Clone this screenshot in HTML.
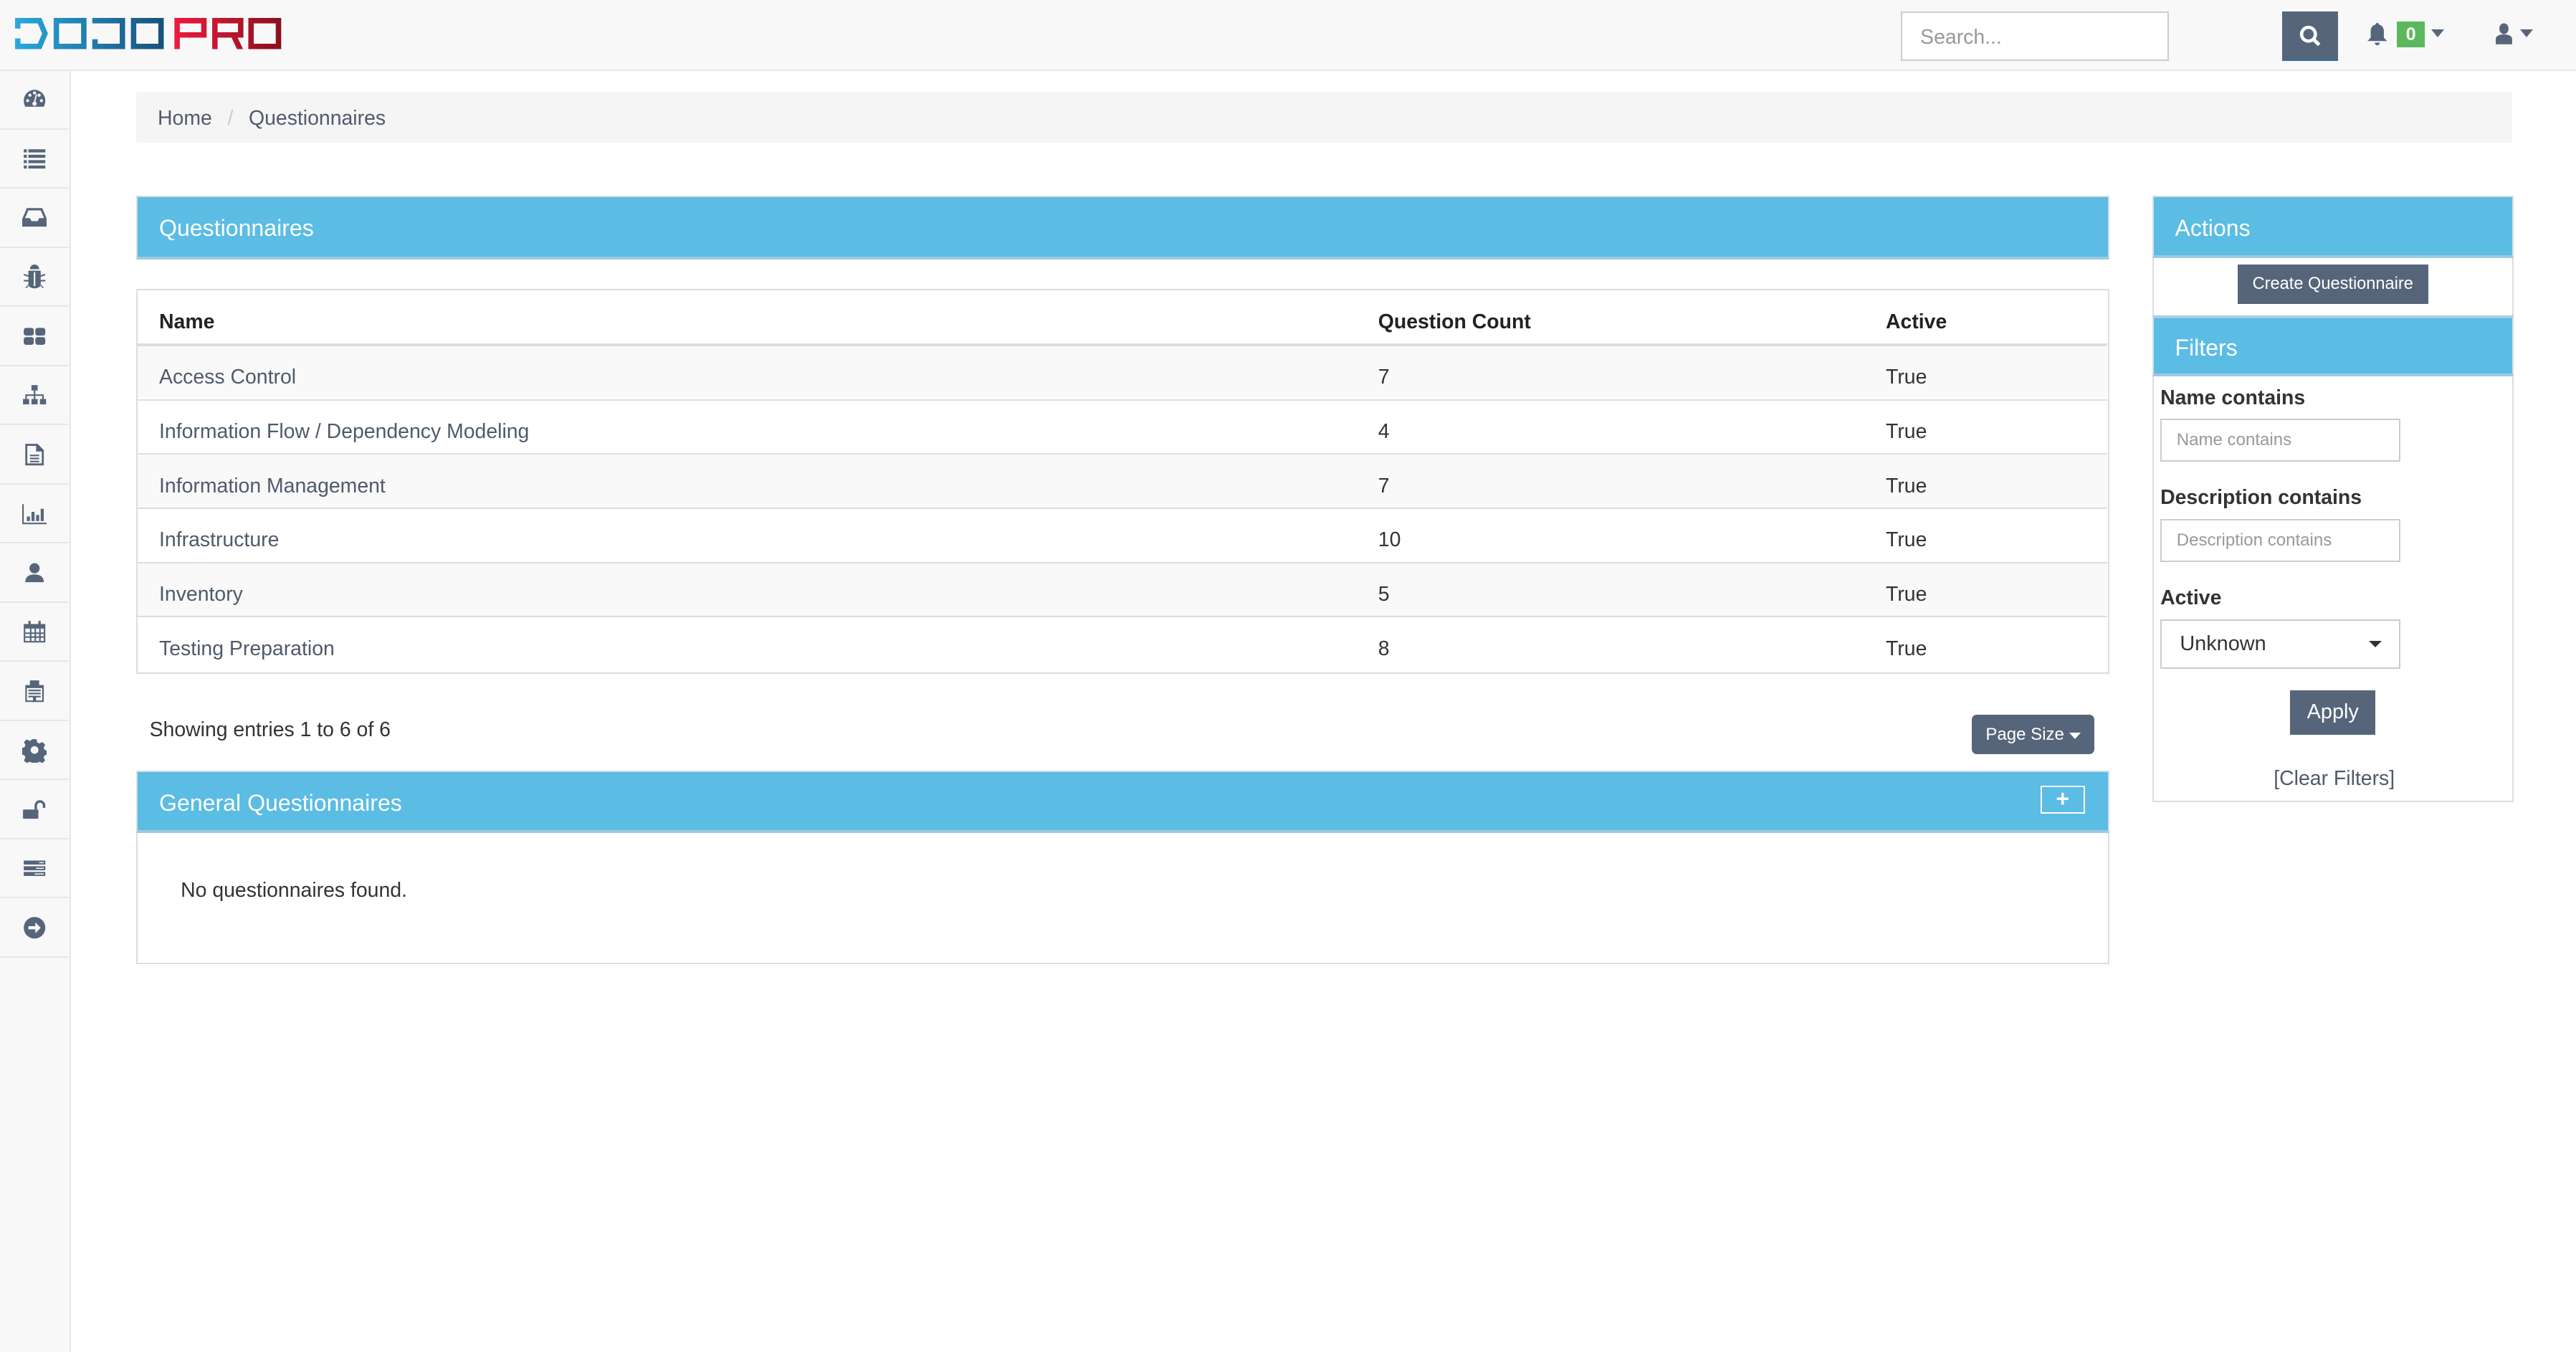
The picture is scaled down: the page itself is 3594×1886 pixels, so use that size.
<!DOCTYPE html>
<html><head><meta charset="utf-8"><style>
html,body{margin:0;padding:0;background:#fff;overflow:hidden}
body{width:1568px;height:823px;zoom:2.2921;position:relative;font-family:"Liberation Sans",Arial,sans-serif;font-size:12.4px;color:#333}
.abs{position:absolute}
.nav{left:0;top:0;width:1568px;height:43px;background:#f8f8f8;border-bottom:1px solid #e7e7e7;box-sizing:border-box}
.side{left:0;top:43px;width:43px;height:780px;background:#f8f8f8;border-right:1px solid #e7e7e7;box-sizing:border-box}
.si{position:absolute;left:0;width:42px;height:35px;border-bottom:1px solid #e6e6e6;display:flex;align-items:center;justify-content:center}
.si svg{width:15px;height:15px;fill:#56657a}
.ph{background:#5bbce4;color:#fff;font-size:14px;box-sizing:border-box;border:1px solid #d6dde2;border-bottom:2px solid #9fc9dd}
.btn{background:#56657a;color:#fff;text-align:center;box-sizing:border-box}
.row{position:absolute;left:0;width:1199px;height:33px;border-top:1px solid #ddd;box-sizing:border-box}
.row span{position:absolute;top:12px;color:#4e5b6b}
.inp{border:1px solid #ccc;background:#fff;box-sizing:border-box;color:#999;font-size:10.5px}
.lbl{font-weight:bold;font-size:12.4px;color:#333}
</style></head><body>
<div class="abs nav"></div>
<svg class="abs" style="left:9px;top:11px" width="163" height="19" viewBox="0 0 163 19">
<defs><linearGradient id="gb" gradientUnits="userSpaceOnUse" x1="0" x2="91"><stop offset="0" stop-color="#2aa8dc"/><stop offset="1" stop-color="#17507c"/></linearGradient>
<linearGradient id="gr" gradientUnits="userSpaceOnUse" x1="97" x2="162"><stop offset="0" stop-color="#ee1a40"/><stop offset="1" stop-color="#8a0f1c"/></linearGradient></defs>
<g fill="url(#gb)" fill-rule="evenodd">
<path d="M0 0h16l4 9.5-4 9.5H0v-6.5h3.3v3.2h10.5l2.7-6.2-2.7-6.2H3.3v3.2H0z"/>
<path d="M23.5 0h20v19h-20zM26.8 3.3v12.4h13.4V3.3z"/>
<path d="M47 0h20v19H47v-6h3.3v2.7h13.4V3.3H47z"/>
<path d="M70.5 0h20v19h-20zM73.8 3.3v12.4h13.4V3.3z"/></g>
<g fill="url(#gr)" fill-rule="evenodd">
<path d="M97 0h19.6v12H100.3v7H97zM100.3 3.3v5.4h13V3.3z"/>
<path d="M120 0h19v12h-3.5l3.3 7h-3.7l-3.3-7h-8.5v7H120zM123.3 3.3v5.4h12.4V3.3z"/>
<path d="M142 0h20v19h-20zM145.3 3.3v12.4h13.4V3.3z"/></g>
</svg>
<div class="abs inp" style="left:1157px;top:7px;width:163px;height:30px;font-size:12.4px;padding:8px 11px;color:#999">Search...</div>
<div class="abs btn" style="left:1389px;top:7px;width:34px;height:30px;border-bottom:1px solid #2e6da4"><svg width="14" height="14" viewBox="0 0 14 14" style="margin-top:8px"><circle cx="6" cy="6" r="4.2" stroke="#fff" stroke-width="2" fill="none"/><path d="M9 9l3.5 3.5" stroke="#fff" stroke-width="2.2"/></svg></div>
<svg class="abs" style="left:1441px;top:14px" width="12" height="14" viewBox="0 0 12 14"><path d="M6 0c.7 0 1 .5 1 1 2 .5 3 2 3 4v4l2 2H0l2-2V5c0-2 1-3.5 3-4 0-.5.3-1 1-1zM4.5 12h3c0 1-.7 1.6-1.5 1.6S4.5 13 4.5 12z" fill="#56657a"/></svg>
<div class="abs" style="left:1459px;top:13px;width:17px;height:16px;background:#5cb85c;color:#fff;font-weight:bold;font-size:11px;text-align:center;line-height:16px">0</div>
<div class="abs" style="left:1480px;top:18px;border:4px solid transparent;border-top:5px solid #56657a"></div>
<svg class="abs" style="left:1519px;top:14px" width="10" height="13" viewBox="0 0 10 13"><ellipse cx="5" cy="3.5" rx="2.8" ry="3.3" fill="#56657a"/><path d="M0 13V10c0-2 2-3 5-3s5 1 5 3v3z" fill="#56657a"/></svg>
<div class="abs" style="left:1534px;top:18px;border:4px solid transparent;border-top:5px solid #56657a"></div>

<div class="abs side">
<div class="si" style="top:0"><svg viewBox="0 0 16 16"><path d="M8 2a7 7 0 00-7 7c0 1.5.4 2.8 1 4h12c.6-1.2 1-2.5 1-4a7 7 0 00-7-7z"/><g fill="#f8f8f8"><circle cx="3.5" cy="9" r="1"/><circle cx="5" cy="5.5" r="1"/><circle cx="12.5" cy="9" r="1"/><circle cx="11" cy="5.5" r="1"/><circle cx="8" cy="4" r="1"/><circle cx="8" cy="11" r="1.4"/><path d="M8.3 10.5l1.4-5.5-.8-.2-1.5 5.5z"/></g></svg></div>
<div class="si" style="top:36px"><svg viewBox="0 0 16 16"><path d="M1 2h2v2H1zM4 2h11v2H4zM1 5.5h2v2H1zM4 5.5h11v2H4zM1 9h2v2H1zM4 9h11v2H4zM1 12.5h2v2H1zM4 12.5h11v2H4z"/></svg></div>
<div class="si" style="top:72px"><svg viewBox="0 0 16 16"><path d="M3 2h10l3 7v5H0V9zM4 3.5L1.8 8.5H5l1 2h4l1-2h3.2L12 3.5z" fill-rule="evenodd"/></svg></div>
<div class="si" style="top:108px"><svg viewBox="0 0 16 16"><path d="M5 3a3 3 0 016 0zM4 4h8v9c0 1.5-2 2.5-4 2.5S4 14.5 4 13zM1 6l3 1v1L1 7zM15 6l-3 1v1l3-1zM1 10h3v1H1zM12 10h3v1h-3zM2 15l2-2v1l-1.5 1.5zM14 15l-2-2v1l1.5 1.5z"/><rect x="7.5" y="5" width="1" height="9" fill="#f8f8f8"/></svg></div>
<div class="si" style="top:144px"><svg viewBox="0 0 16 16"><rect x="1" y="2.5" width="6.5" height="5" rx="1.5"/><rect x="8.5" y="2.5" width="6.5" height="5" rx="1.5"/><rect x="1" y="8.5" width="6.5" height="5" rx="1.5"/><rect x="8.5" y="8.5" width="6.5" height="5" rx="1.5"/></svg></div>
<div class="si" style="top:180px"><svg viewBox="0 0 16 16"><rect x="6" y="1.5" width="4" height="3.5"/><rect x="0.5" y="10.5" width="4" height="3.5"/><rect x="6" y="10.5" width="4" height="3.5"/><rect x="11.5" y="10.5" width="4" height="3.5"/><path d="M7.5 5h1v2.5h5.5V10.5h-1V8.5H8.5v2h-1v-2H3v2H2V7.5h5.5z"/></svg></div>
<div class="si" style="top:216px"><svg viewBox="0 0 16 16"><path d="M2 1h8l4 4v10H2zM3.3 2.3v11.4h9.4V6H9V2.3z" fill-rule="evenodd"/><path d="M5 8h6v1H5zM5 10h6v1H5zM5 12h6v1H5z"/></svg></div>
<div class="si" style="top:252px"><svg viewBox="0 0 16 16"><path d="M0 2h1v12h15v1H0zM3 10h2v3H3zM6 7h2v6H6zM9 9h2v4H9zM12 5h2v8h-2z"/></svg></div>
<div class="si" style="top:288px"><svg viewBox="0 0 16 16"><ellipse cx="8" cy="5" rx="3.3" ry="3.3"/><path d="M2 14c0-4 3-5 6-5s6 1 6 5z"/></svg></div>
<div class="si" style="top:324px"><svg viewBox="0 0 16 16"><path d="M1 3h14v12H1zM2 6v8h12V6z" fill-rule="evenodd"/><path d="M4 1h1.5v3H4zM10.5 1H12v3h-1.5zM2 8.5h12v1H2zM2 11h12v1H2zM5 6h1v8H5zM8 6h1v8H8zM11 6h1v8h-1z"/></svg></div>
<div class="si" style="top:360px"><svg viewBox="0 0 16 16"><path d="M2 4h12v11H2zM3 6v8h10V6z" fill-rule="evenodd"/><path d="M5 1h6v4H5zM4 7h8v1H4zM4 9h8v1H4zM4 11h8v1H4zM7 12h2v3H7z"/></svg></div>
<div class="si" style="top:396px"><svg viewBox="0 0 16 16"><path d="M6.7 1h2.6l.4 2 1.5.8 1.9-1 1.8 1.8-1 1.9.7 1.5 2 .4v2.6l-2 .4-.7 1.5 1 1.9-1.8 1.8-1.9-1-1.5.7-.4 2H6.7l-.4-2-1.5-.7-1.9 1-1.8-1.8 1-1.9-.7-1.5-2-.4V6.7l2-.4.7-1.5-1-1.9 1.8-1.8 1.9 1 1.5-.8z"/><circle cx="8" cy="8" r="2.5" fill="#f8f8f8"/></svg></div>
<div class="si" style="top:432px"><svg viewBox="0 0 16 16"><rect x="0.5" y="8" width="10" height="6" rx="0.5"/><path d="M8 8V5.5a3.5 3.5 0 017 0V7h-1.6V5.5a1.9 1.9 0 00-3.8 0V8z"/></svg></div>
<div class="si" style="top:468px"><svg viewBox="0 0 16 16"><rect x="1" y="3" width="14" height="2.6"/><rect x="1" y="6.7" width="14" height="2.6"/><rect x="1" y="10.4" width="14" height="2.6"/><g fill="#f8f8f8"><rect x="11" y="4" width="3" height=".7"/><rect x="9" y="7.7" width="5" height=".7"/><rect x="8" y="11.4" width="6" height=".7"/></g></svg></div>
<div class="si" style="top:504px"><svg viewBox="0 0 16 16"><circle cx="8" cy="8" r="7"/><path d="M4 7h4.5V4.5L12 8l-3.5 3.5V9H4z" fill="#f8f8f8"/></svg></div>
</div>

<div class="abs" style="left:83px;top:56px;width:1446px;height:31px;background:#f5f5f5"></div>
<div class="abs" style="left:96px;top:65px;color:#4e5b6b">Home <span style="color:#ccc;padding:0 6px">/</span> Questionnaires</div>

<div class="abs ph" style="left:83px;top:119px;width:1201px;height:39px;padding:11px 13px">Questionnaires</div>

<div class="abs" style="left:83px;top:176px;width:1201px;height:234px;border:1px solid #ddd;box-sizing:border-box">
<div class="abs" style="left:13px;top:12px;font-weight:bold;color:#222">Name</div>
<div class="abs" style="left:755px;top:12px;font-weight:bold;color:#222">Question Count</div>
<div class="abs" style="left:1064px;top:12px;font-weight:bold;color:#222">Active</div>
<div class="row" style="top:32px;background:#f9f9f9;border-top:2px solid #ddd"><span style="left:13px">Access Control</span><span style="left:755px;color:#333">7</span><span style="left:1064px;color:#333">True</span></div>
<div class="row" style="top:66px"><span style="left:13px">Information Flow / Dependency Modeling</span><span style="left:755px;color:#333">4</span><span style="left:1064px;color:#333">True</span></div>
<div class="row" style="top:99px;background:#f9f9f9"><span style="left:13px">Information Management</span><span style="left:755px;color:#333">7</span><span style="left:1064px;color:#333">True</span></div>
<div class="row" style="top:132px"><span style="left:13px">Infrastructure</span><span style="left:755px;color:#333">10</span><span style="left:1064px;color:#333">True</span></div>
<div class="row" style="top:165px;background:#f9f9f9"><span style="left:13px">Inventory</span><span style="left:755px;color:#333">5</span><span style="left:1064px;color:#333">True</span></div>
<div class="row" style="top:198px"><span style="left:13px">Testing Preparation</span><span style="left:755px;color:#333">8</span><span style="left:1064px;color:#333">True</span></div>
</div>

<div class="abs" style="left:91px;top:437px">Showing entries 1 to 6 of 6</div>
<div class="abs btn" style="left:1200px;top:435px;width:75px;height:24px;border-radius:3px;font-size:10.5px;line-height:24px">Page Size <span style="display:inline-block;border:3.5px solid transparent;border-top:4px solid #fff;vertical-align:-3px"></span></div>

<div class="abs" style="left:83px;top:469px;width:1201px;height:118px;border:1px solid #ddd;box-sizing:border-box"></div>
<div class="abs ph" style="left:83px;top:469px;width:1201px;height:38px;padding:11px 13px">General Questionnaires</div>
<div class="abs" style="left:1242px;top:478px;width:27px;height:17px;border:1px solid #fff;box-sizing:border-box;color:#fff;font-weight:bold;text-align:center;line-height:14px;font-size:14px">+</div>
<div class="abs" style="left:110px;top:535px">No questionnaires found.</div>

<div class="abs" style="left:1310px;top:119px;width:220px;height:369px;border:1px solid #ddd;box-sizing:border-box"></div>
<div class="abs ph" style="left:1310px;top:119px;width:220px;height:38px;padding:11px 13px">Actions</div>
<div class="abs btn" style="left:1362px;top:161px;width:116px;height:24px;font-size:10.3px;line-height:24px">Create Questionnaire</div>
<div class="abs ph" style="left:1310px;top:192px;width:220px;height:37px;padding:10px 13px;border-top:2px solid #a9cfe0">Filters</div>
<div class="abs lbl" style="left:1315px;top:235px">Name contains</div>
<div class="abs inp" style="left:1315px;top:255px;width:146px;height:26px;padding:6px 9px">Name contains</div>
<div class="abs lbl" style="left:1315px;top:296px">Description contains</div>
<div class="abs inp" style="left:1315px;top:316px;width:146px;height:26px;padding:6px 9px">Description contains</div>
<div class="abs lbl" style="left:1315px;top:357px">Active</div>
<div class="abs inp" style="left:1315px;top:377px;width:146px;height:30px;padding:7px 11px;color:#333;font-size:12.6px">Unknown</div>
<div class="abs" style="left:1442px;top:390px;border:4px solid transparent;border-top:4px solid #333"></div>
<div class="abs btn" style="left:1394px;top:420px;width:52px;height:27px;line-height:27px;font-size:12.6px">Apply</div>
<div class="abs" style="left:1384px;top:467px;color:#4e5b6b">[Clear Filters]</div>
</body></html>
